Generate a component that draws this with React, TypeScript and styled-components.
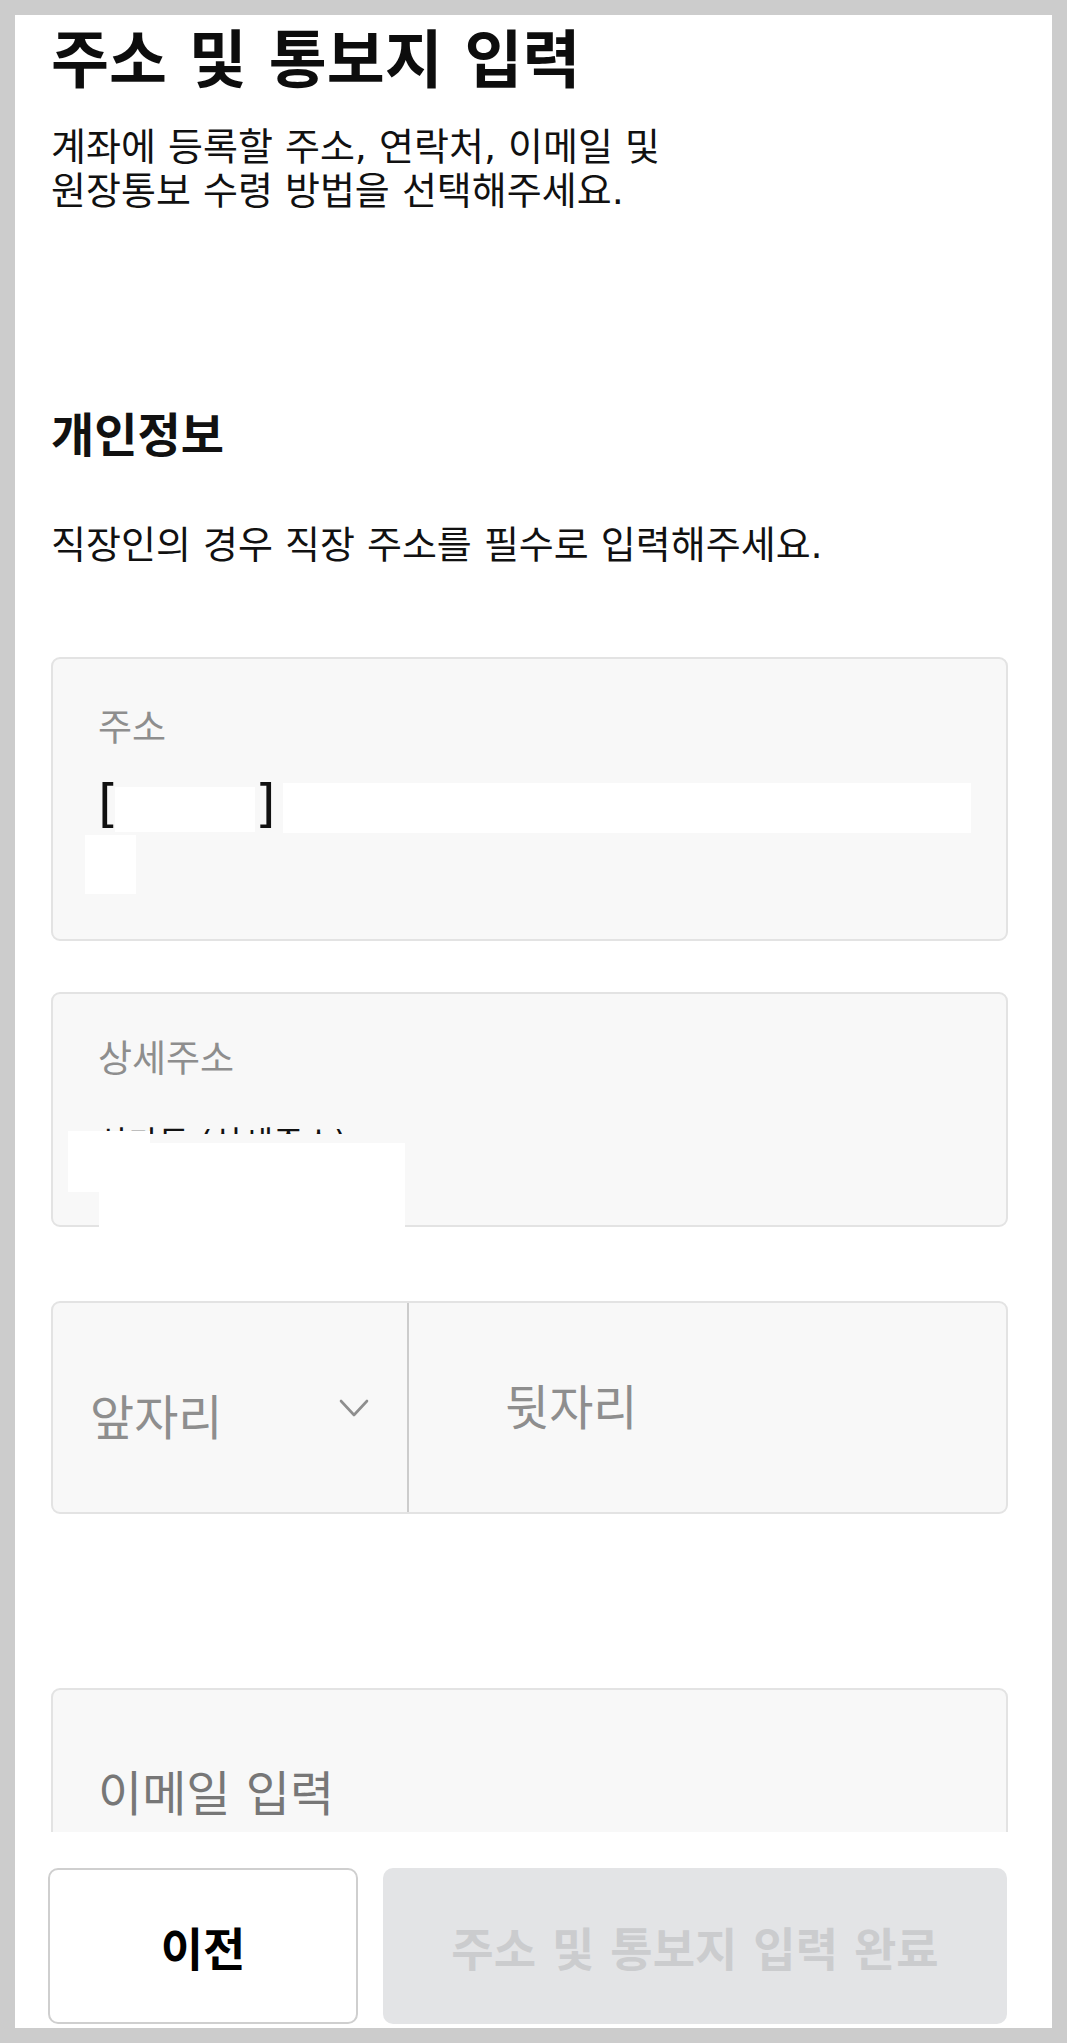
import React from "react";
import styled, { createGlobalStyle } from "styled-components";

const GlobalStyle = createGlobalStyle`
  html, body {
    margin: 0;
    padding: 0;
  }
  body {
    background: #cccccc;
    padding: 15px;
    font-family: "DejaVu Sans", "Noto Sans CJK KR", sans-serif;
    color: #111111;
  }
  * { box-sizing: border-box; }
`;

const Panel = styled.div`
  background: #ffffff;
  height: 2013px;
  display: flex;
  flex-direction: column;
  overflow: hidden;
`;

const Content = styled.div`
  flex: 1;
  overflow: hidden;
  padding: 6px 44px 0 36px;
  display: flex;
  flex-direction: column;
`;

const Title = styled.h1`
  margin: 0;
  font-size: 63px;
  line-height: 80px;
  font-weight: 700;
  color: #0d0d0d;
`;

const Subtitle = styled.p`
  margin: 24px 0 0;
  font-size: 38px;
  line-height: 44px;
  font-weight: 400;
  color: #111111;
`;

const SectionTitle = styled.h2`
  margin: 196px 0 0;
  font-size: 47px;
  line-height: 54px;
  font-weight: 700;
  color: #111111;
`;

const Description = styled.p`
  margin: 60px 0 0;
  font-size: 38px;
  line-height: 44px;
  color: #111111;
`;

const Field = styled.div<{ $mt: number; $pt: number; $pb: number }>`
  position: relative;
  flex-shrink: 0;
  margin-top: ${(p) => p.$mt}px;
  padding: ${(p) => p.$pt}px 45px ${(p) => p.$pb}px 45px;
  background: #f8f8f8;
  border: 2px solid #e3e3e3;
  border-radius: 9px;
  display: flex;
  flex-direction: column;
`;

const Label = styled.div`
  font-size: 37px;
  line-height: 44px;
  color: #8e8e8e;
`;

const ValueRow = styled.div<{ $mt: number }>`
  display: flex;
  align-items: flex-start;
  margin-top: ${(p) => p.$mt}px;
`;

const Bracket = styled.span`
  font-size: 52px;
  line-height: 40px;
  height: 50px;
  color: #111111;
`;

const Redact = styled.span<{ $w: number; $h: number; $ml?: number; $mt?: number }>`
  display: block;
  flex-shrink: 0;
  width: ${(p) => p.$w}px;
  height: ${(p) => p.$h}px;
  margin-left: ${(p) => p.$ml ?? 0}px;
  margin-top: ${(p) => p.$mt ?? 0}px;
  background: #ffffff;
`;

const Cover = styled.span<{ $l: number; $t: number; $w: number; $h: number }>`
  position: absolute;
  left: ${(p) => p.$l}px;
  top: ${(p) => p.$t}px;
  width: ${(p) => p.$w}px;
  height: ${(p) => p.$h}px;
  background: #ffffff;
`;

const ClippedValue = styled.div`
  margin-top: 45px;
  height: 7px;
  overflow: hidden;
  font-size: 33px;
  line-height: 33px;
  color: #111111;
  white-space: nowrap;
`;

const PhoneField = styled.div`
  margin-top: 74px;
  height: 213px;
  flex-shrink: 0;
  display: flex;
  background: #f8f8f8;
  border: 2px solid #e3e3e3;
  border-radius: 9px;
`;

const PrefixSelect = styled.div`
  width: 356px;
  flex-shrink: 0;
  display: flex;
  align-items: center;
  justify-content: space-between;
  padding: 0 38px 0 37px;
  border-right: 2px solid #cccccc;
`;

const Placeholder = styled.span<{ $shift?: number; $color?: string }>`
  font-size: 48px;
  line-height: 58px;
  color: ${(p) => p.$color ?? "#8e8e8e"};
  margin-top: ${(p) => p.$shift ?? 0}px;
`;

const SuffixInput = styled.div`
  flex: 1;
  display: flex;
  align-items: center;
  padding: 0 0 0 96px;
`;

const EmailField = styled.div`
  margin-top: 174px;
  height: 213px;
  flex-shrink: 0;
  padding: 75px 45px 0;
  background: #f8f8f8;
  border: 2px solid #e3e3e3;
  border-radius: 9px;
`;

const BottomBar = styled.div`
  height: 196px;
  flex-shrink: 0;
  display: flex;
  gap: 25px;
  padding: 36px 45px 4px 33px;
  background: #ffffff;
`;

const Button = styled.button<{ $primary?: boolean }>`
  flex: ${(p) => (p.$primary ? "1 1 auto" : "0 0 310px")};
  height: 156px;
  border-radius: 10px;
  font-family: "DejaVu Sans", "Noto Sans CJK KR", sans-serif;
  font-size: 46px;
  font-weight: 700;
  display: flex;
  align-items: center;
  justify-content: center;
  padding: 0;
  cursor: pointer;
  border: ${(p) => (p.$primary ? "none" : "2px solid #cfcfcf")};
  background: ${(p) => (p.$primary ? "#e3e4e6" : "#ffffff")};
  color: ${(p) => (p.$primary ? "#cbccce" : "#000000")};
`;

const Chevron = () => (
  <svg width="30" height="18" viewBox="0 0 30 18" fill="none">
    <path d="M2 2 L15 16 L28 2" stroke="#8e8e8e" strokeWidth="2.6" strokeLinecap="round" strokeLinejoin="round" />
  </svg>
);

export default function App() {
  return (
    <>
      <GlobalStyle />
      <Panel>
        <Content>
          <Title>주소 및 통보지 입력</Title>
          <Subtitle>
            계좌에 등록할 주소, 연락처, 이메일 및
            <br />
            원장통보 수령 방법을 선택해주세요.
          </Subtitle>
          <SectionTitle>개인정보</SectionTitle>
          <Description>직장인의 경우 직장 주소를 필수로 입력해주세요.</Description>

          <Field $mt={90} $pt={48} $pb={45}>
            <Label>주소</Label>
            <ValueRow $mt={32}>
              <Bracket>[</Bracket>
              <Redact $w={140} $h={45} $ml={-3} $mt={4} />
              <Bracket>]</Bracket>
              <Redact $w={688} $h={50} $ml={7} />
            </ValueRow>
            <ValueRow $mt={2}>
              <Redact $w={51} $h={59} $ml={-13} />
            </ValueRow>
          </Field>

          <Field $mt={51} $pt={44} $pb={91}>
            <Label>상세주소</Label>
            <ClippedValue>상가동 (상세주소)</ClippedValue>
            <Cover $l={15} $t={137} $w={82} $h={61} />
            <Cover $l={46} $t={149} $w={306} $h={85} />
          </Field>

          <PhoneField>
            <PrefixSelect>
              <Placeholder $shift={20}>앞자리</Placeholder>
              <Chevron />
            </PrefixSelect>
            <SuffixInput>
              <Placeholder>뒷자리</Placeholder>
            </SuffixInput>
          </PhoneField>

          <EmailField>
            <Placeholder $color="#777777">이메일 입력</Placeholder>
          </EmailField>
        </Content>
        <BottomBar>
          <Button type="button">이전</Button>
          <Button type="button" $primary>
            주소 및 통보지 입력 완료
          </Button>
        </BottomBar>
      </Panel>
    </>
  );
}
